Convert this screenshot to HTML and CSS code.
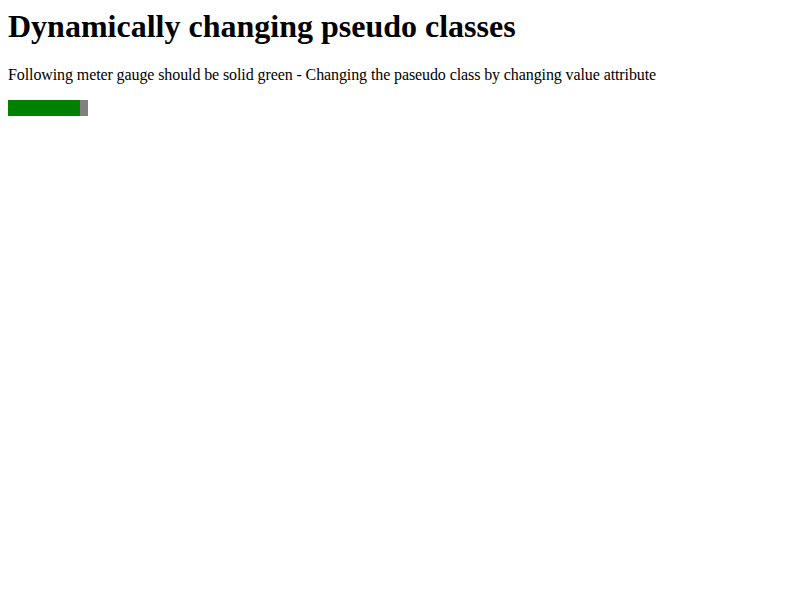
FILE: index.html
```html
<!DOCTYPE html>
<html>
<head>
<meta charset="utf-8">
<link rel="stylesheet" href="styles.css">
</head>
<body>
<h1 class="title">Dynamically changing pseudo classes</h1>
<p class="desc">Following meter gauge should be solid green - Changing the paseudo class by changing value attribute</p>
<div class="meter"><div class="meter-fill" style="width: 90%"></div></div>
</body>
</html>
```
FILE: styles.css
```css
body {
  margin: 8px;
  font-family: "Liberation Serif", "Times New Roman", serif;
  background: #fff;
  color: #000;
}
.title {
  font-size: 32px;
  font-weight: bold;
  margin: 0 0 21.44px 0;
}
.desc {
  font-size: 16px;
  letter-spacing: -0.1px;
  margin: 0 0 16px 0;
}
.meter {
  width: 80px;
  height: 16px;
  background: #808080;
  display: flex;
}
.meter-fill {
  height: 100%;
  background: #008000;
}
```
